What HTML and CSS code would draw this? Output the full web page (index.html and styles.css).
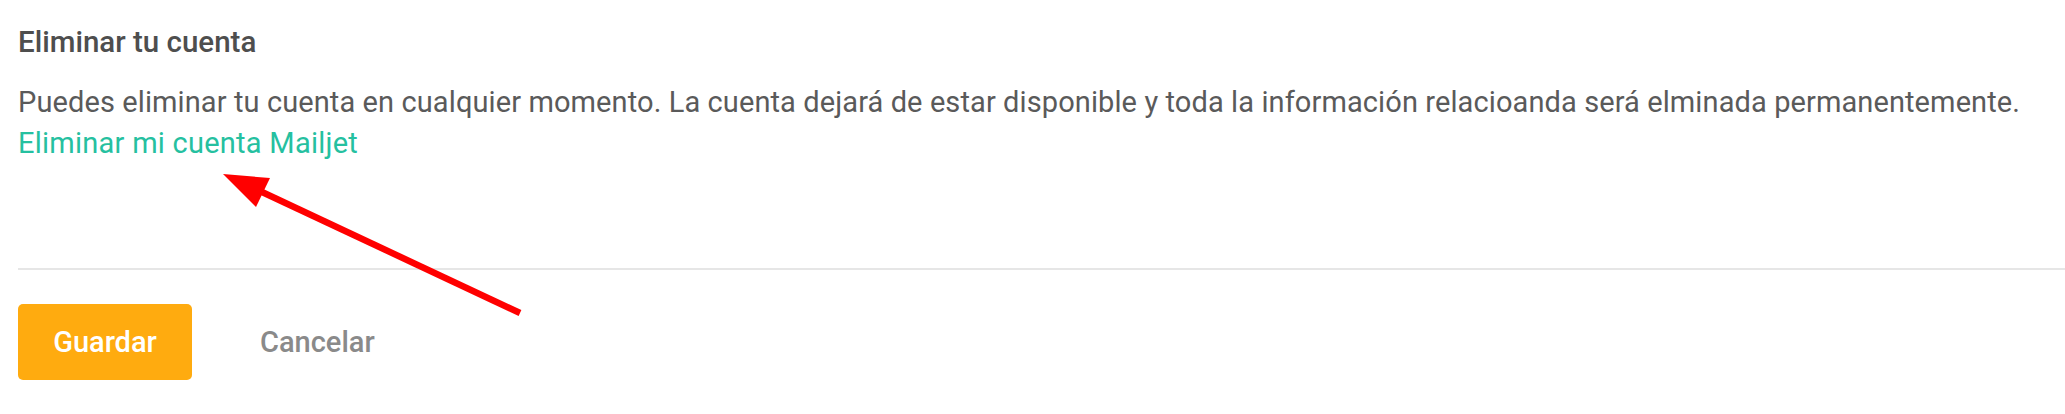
FILE: index.html
```html
<!DOCTYPE html>
<html lang="es">
<head>
<meta charset="utf-8">
<title>Eliminar tu cuenta</title>
<link rel="stylesheet" href="styles.css">
</head>
<body>
<main class="page">
  <section class="section">
    <h2 class="section-title">Eliminar tu cuenta</h2>
    <p class="section-text">Puedes eliminar tu cuenta en cualquier momento. La cuenta dejará de estar disponible y toda la información relacioanda será elminada permanentemente.
      <a class="delete-link" href="#">Eliminar mi cuenta Mailjet</a>
    </p>
  </section>
  <hr class="divider">
  <div class="actions">
    <button class="btn btn-primary" type="button">Guardar</button>
    <button class="btn btn-link" type="button">Cancelar</button>
  </div>
  <svg class="annotation" width="2065" height="414" viewBox="0 0 2065 414" aria-hidden="true">
    <line x1="520" y1="313" x2="262" y2="192" stroke="#ff0000" stroke-width="6.5"/>
    <polygon points="223,174 270,178 256,207" fill="#ff0000"/>
  </svg>
</main>
</body>
</html>
```
FILE: styles.css
```css
html, body {
  margin: 0;
  padding: 0;
  background: #ffffff;
}

body {
  font-family: Roboto, "Liberation Sans", Arial, sans-serif;
  overflow: hidden;
}

.page {
  position: relative;
  padding: 22px 0 0 18px;
  min-height: 414px;
  box-sizing: border-box;
}

.section-title {
  margin: 0;
  font-size: 29.5px;
  line-height: 40px;
  font-weight: 500;
  color: #4e4e4e;
}

.section-text {
  margin: 20px 0 0;
  font-size: 29px;
  line-height: 41px;
  letter-spacing: 0.1px;
  color: #5a5a5a;
}

.delete-link {
  display: block;
  color: #25c0a0;
  letter-spacing: 0.25px;
  text-decoration: none;
}

.divider {
  margin: 104px 0 0;
  border: 0;
  height: 2px;
  background: #e6e6e6;
}

.actions {
  display: flex;
  align-items: center;
  gap: 68px;
  margin-top: 34px;
}

.btn {
  font-family: Roboto, "Liberation Sans", Arial, sans-serif;
  font-size: 29px;
  font-weight: 500;
  border: 0;
  cursor: pointer;
}

.btn-primary {
  width: 174px;
  height: 76px;
  border-radius: 5px;
  background: #ffab0f;
  color: #ffffff;
  padding: 0;
}

.btn-link {
  background: transparent;
  color: #8a8a8a;
  padding: 0;
}

.annotation {
  position: absolute;
  top: 0;
  left: 0;
  pointer-events: none;
}
```
